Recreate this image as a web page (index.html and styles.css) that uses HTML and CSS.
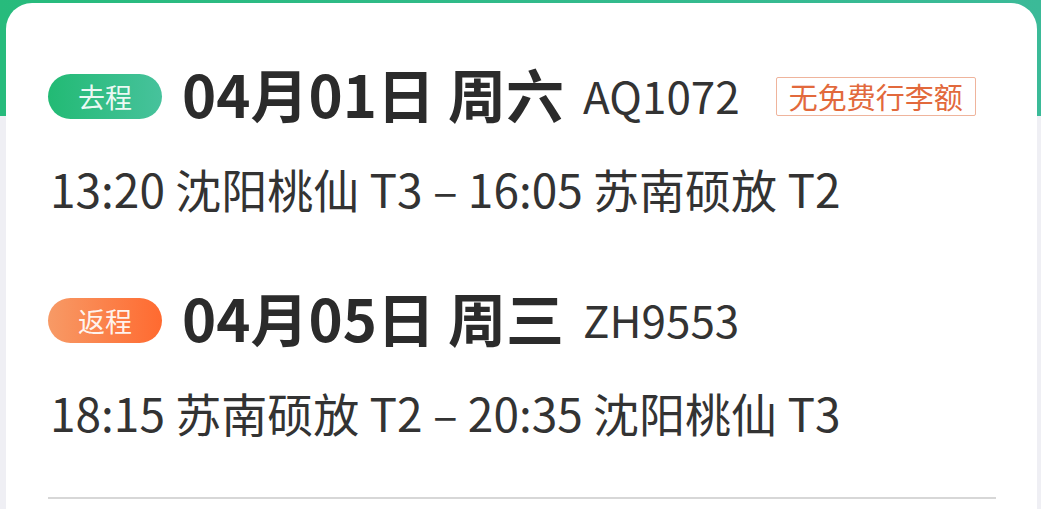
FILE: index.html
```html
<!DOCTYPE html>
<html lang="zh">
<head>
<meta charset="utf-8">
<link rel="stylesheet" href="styles.css">
</head>
<body>
<div class="page">
  <div class="card">
    <div class="leg">
      <div class="head">
        <span class="badge badge-go">去程</span>
        <span class="date">04月01日 周六</span>
        <span class="flight">AQ1072</span>
        <span class="tag">无免费行李额</span>
      </div>
      <div class="route">13:20 沈阳桃仙 T3 – 16:05 苏南硕放 T2</div>
    </div>
    <div class="leg">
      <div class="head">
        <span class="badge badge-back">返程</span>
        <span class="date">04月05日 周三</span>
        <span class="flight">ZH9553</span>
      </div>
      <div class="route">18:15 苏南硕放 T2 – 20:35 沈阳桃仙 T3</div>
    </div>
    <div class="divider"></div>
  </div>
</div>
</body>
</html>
```
FILE: styles.css
```css
html, body {
  margin: 0;
  padding: 0;
}
body {
  width: 1041px;
  height: 509px;
  overflow: hidden;
  background: linear-gradient(to bottom, transparent 0, transparent 116px, #efeff4 116px),
              linear-gradient(to right, #27bb7c, #3bba98);
  font-family: "Noto Sans CJK SC", "Noto Sans", sans-serif;
  color: #333;
}
.page {
  padding: 3px 4px 0 6px;
}
.card {
  background: #fff;
  border-radius: 26px 26px 0 0;
  height: 506px;
  padding: 70px 41px 0 42px;
  box-sizing: border-box;
}
.leg {
  display: flex;
  flex-direction: column;
}
.leg + .leg {
  margin-top: 86px;
}
.head {
  display: flex;
  align-items: center;
  height: 46px;
}
.badge {
  width: 114px;
  height: 45px;
  border-radius: 23px;
  display: flex;
  align-items: center;
  justify-content: center;
  font-size: 27px;
  color: rgba(255,255,255,0.92);
  flex: none;
}
.badge-go {
  background: linear-gradient(to right, #22ba74, #47c29c);
}
.badge-back {
  background: linear-gradient(to right, #f79a66, #ff6a30);
}
.date {
  margin-left: 20px;
  font-size: 58px;
  font-weight: 700;
  line-height: 1;
  padding-bottom: 7px;
  color: #2b2b2b;
  white-space: nowrap;
}
.flight {
  margin-left: 19px;
  font-size: 44px;
  line-height: 1;
  padding-bottom: 2px;
  color: #333;
}
.tag {
  margin-left: 36px;
  border: 1px solid #efb49c;
  color: #e2693c;
  font-size: 29px;
  line-height: 1;
  padding: 4px 12px;
  border-radius: 2px;
  white-space: nowrap;
}
.route {
  margin-top: 46px;
  font-size: 46px;
  line-height: 1;
  color: #333;
  padding-left: 2px;
  white-space: nowrap;
}
.divider {
  margin-top: 62px;
  height: 2px;
  background: #d7d7d7;
}
```
